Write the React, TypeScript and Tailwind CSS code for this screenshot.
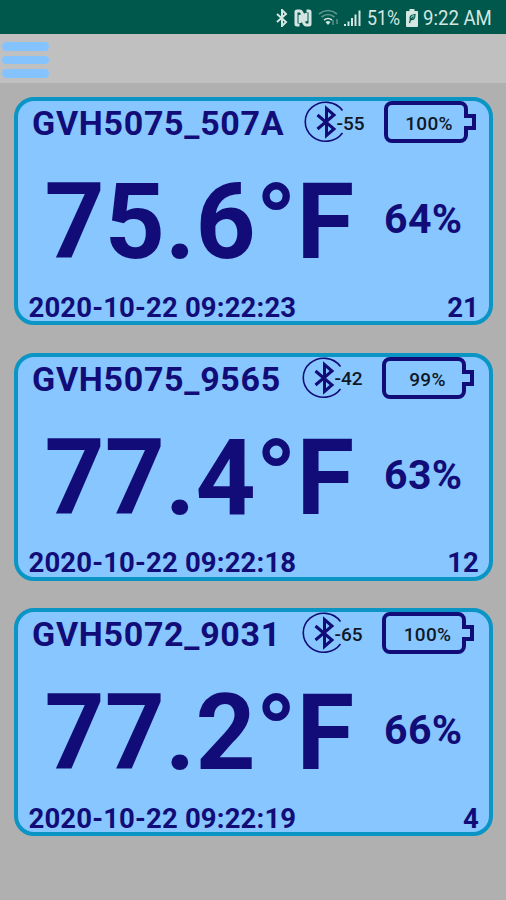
type Sensor = {
  name: string;
  rssi: string;
  battery: string;
  temperature: string;
  humidity: string;
  time: string;
  count: string;
};

const sensors: Sensor[] = [
  {
    name: 'GVH5075_507A',
    rssi: '-55',
    battery: '100%',
    temperature: '75.6°F',
    humidity: '64%',
    time: '2020-10-22 09:22:23',
    count: '21',
  },
  {
    name: 'GVH5075_9565',
    rssi: '-42',
    battery: '99%',
    temperature: '77.4°F',
    humidity: '63%',
    time: '2020-10-22 09:22:18',
    count: '12',
  },
  {
    name: 'GVH5072_9031',
    rssi: '-65',
    battery: '100%',
    temperature: '77.2°F',
    humidity: '66%',
    time: '2020-10-22 09:22:19',
    count: '4',
  },
];

function StatusBar() {
  return (
    <div className="flex h-[34px] items-center bg-[#00574b] pt-[2px] pl-[276px] text-[#d3e6e2]">
      <svg className="h-[18px] w-[12px] shrink-0" viewBox="0 0 12 18" fill="none" stroke="currentColor" strokeWidth="2">
        <path d="M1 5l9 8-4 4V1l4 4-9 8" />
      </svg>
      <svg className="ml-[6px] h-[18px] w-[18px] shrink-0" viewBox="0 0 18 18" fill="none" stroke="currentColor">
        <path strokeWidth="3" d="M5.500 16H3q-1 0-1-1V3q0-1 1-1h3q1 0 1.500 1l4.500 9V4" />
        <path strokeWidth="3" d="M12.500 2H15q1 0 1 1v12q0 1-1 1h-3q-1 0-1.500-1L6 6v8" />
      </svg>
      <svg className="ml-[6px] h-[18px] w-[22px] shrink-0" viewBox="0 0 22 18" fill="none" stroke="currentColor" strokeWidth="1.6">
        <path opacity="0.45" d="M1 5q9-7 18 0M3.500 8q6.500-5 13 0" />
        <path d="M6 11q4-3 8 0" />
        <path fill="currentColor" stroke="none" d="M7.500 13q2.500-2 5 0l-2.500 3z" />
        <path opacity="0.4" d="M15 11v5M19 10v5" />
      </svg>
      <svg className="ml-[4px] h-[18px] w-[18px] shrink-0" viewBox="0 0 18 18" fill="currentColor">
        <path d="M0 15h2v2H0zM3.500 12.500h2V17h-2zM7 9h2v8H7zM10.500 5.500h2V17h-2zM14.500 1.500h2V17h-2z" />
      </svg>
      <span className="ml-[5px] w-[34px] shrink-0 origin-left scale-x-[0.85] text-[21px] leading-none whitespace-nowrap">51%</span>
      <svg className="ml-[5px] h-[18px] w-[12px] shrink-0" viewBox="0 0 12 18">
        <path fill="currentColor" d="M3.500 0h5v2H11q1 0 1 1v14q0 1-1 1H1q-1 0-1-1V3q0-1 1-1h2.500z" />
        <path fill="none" stroke="#00574b" strokeWidth="1.200" d="M3.500 14l1-3.500M4.500 10.500q-2-4 4.500-5 0 6-4.500 5l3-3" />
      </svg>
      <span className="ml-[5px] w-[69px] shrink-0 origin-left scale-x-[0.885] text-[21px] leading-none whitespace-nowrap">9:22 AM</span>
    </div>
  );
}

function Toolbar() {
  return (
    <div className="flex h-[49px] items-center bg-[#c0c0c0] pl-[2px]">
      <button aria-label="Menu" className="flex flex-col gap-[5px] pt-[3px]">
        <span className="h-[8.500px] w-[47px] rounded-full bg-[#85c3ff]" />
        <span className="h-[8.500px] w-[47px] rounded-full bg-[#85c3ff]" />
        <span className="h-[8.500px] w-[47px] rounded-full bg-[#85c3ff]" />
      </button>
    </div>
  );
}

function Signal({ rssi }: { rssi: string }) {
  return (
    <div className="flex h-[42px] items-center text-[#120c78]">
      <svg className="h-[42px] w-[42px] shrink-0" viewBox="0 0 42 42" fill="none" stroke="currentColor">
        <path strokeWidth="1.6" d="M39.500 9.500A20.500 19.500 0 1 0 39.500 32" />
        <path strokeWidth="3" d="M14.500 14l16.500 14-7.500 6.500V7.500l7.500 6.500L14.500 28" />
      </svg>
      <span className="-ml-[8px] pt-[2px] text-[19px] leading-none font-medium text-[#101828]">{rssi}</span>
    </div>
  );
}

function Battery({ level }: { level: string }) {
  return (
    <div className="flex h-[42px] w-[92px] items-center text-[#120c78]">
      <div className="flex h-[42px] w-[84px] shrink-0 items-center justify-center rounded-[8px] border-4 border-current pl-[7px] pt-[3px]">
        <span className="text-[19px] leading-none font-medium tracking-[0.3px] text-[#101828]">{level}</span>
      </div>
      <svg className="-ml-[4px] h-[20px] w-[12px] shrink-0" viewBox="0 0 12 20">
        <path fill="#87c6ff" d="M0 2h8v16H0z" />
        <path fill="none" stroke="currentColor" strokeWidth="4" d="M2 0v4h8v12H2v4" />
      </svg>
    </div>
  );
}

function SensorCard({ sensor, wide }: { sensor: Sensor; wide: boolean }) {
  return (
    <article className="flex h-[228px] w-[479px] flex-col rounded-[20px] border-4 border-[#0a95c5] bg-[#87c6ff] font-bold text-[#120c78]">
      <header className="flex h-[42px] items-center font-normal">
        <h2 className="w-[270px] shrink-0 pt-[2px] pl-[14px] text-[34px] leading-none font-bold tracking-[0.7px] whitespace-nowrap">{sensor.name}</h2>
        <div className={wide ? 'ml-[14.500px] w-[81px] shrink-0' : 'ml-[12.500px] w-[81.500px] shrink-0'}>
          <Signal rssi={sensor.rssi} />
        </div>
        <Battery level={sensor.battery} />
      </header>
      <div className="flex flex-1 items-center">
        <span className="w-[338px] shrink-0 pt-[13px] pl-[26.500px] text-[105px] leading-none whitespace-nowrap">{sensor.temperature}</span>
        <span className="pt-[7px] pl-[28px] text-[41px] leading-none tracking-[0.4px]">{sensor.humidity}</span>
      </div>
      <footer className="flex h-[32px] items-center justify-between pt-[5px] pr-[10px] pl-[10.500px] text-[27.500px] leading-none tracking-[0.15px]">
        <span className="whitespace-nowrap">{sensor.time}</span>
        <span>{sensor.count}</span>
      </footer>
    </article>
  );
}

export default function App() {
  return (
    <div className="h-[900px] w-[506px] overflow-hidden bg-[#b0b0b0] font-[Roboto,sans-serif]">
      <StatusBar />
      <Toolbar />
      <main className="flex flex-col gap-[27.700px] pt-[14px] pl-[14px]">
        {sensors.map((sensor, i) => (
          <SensorCard key={sensor.name} sensor={sensor} wide={i === 0} />
        ))}
      </main>
    </div>
  );
}
